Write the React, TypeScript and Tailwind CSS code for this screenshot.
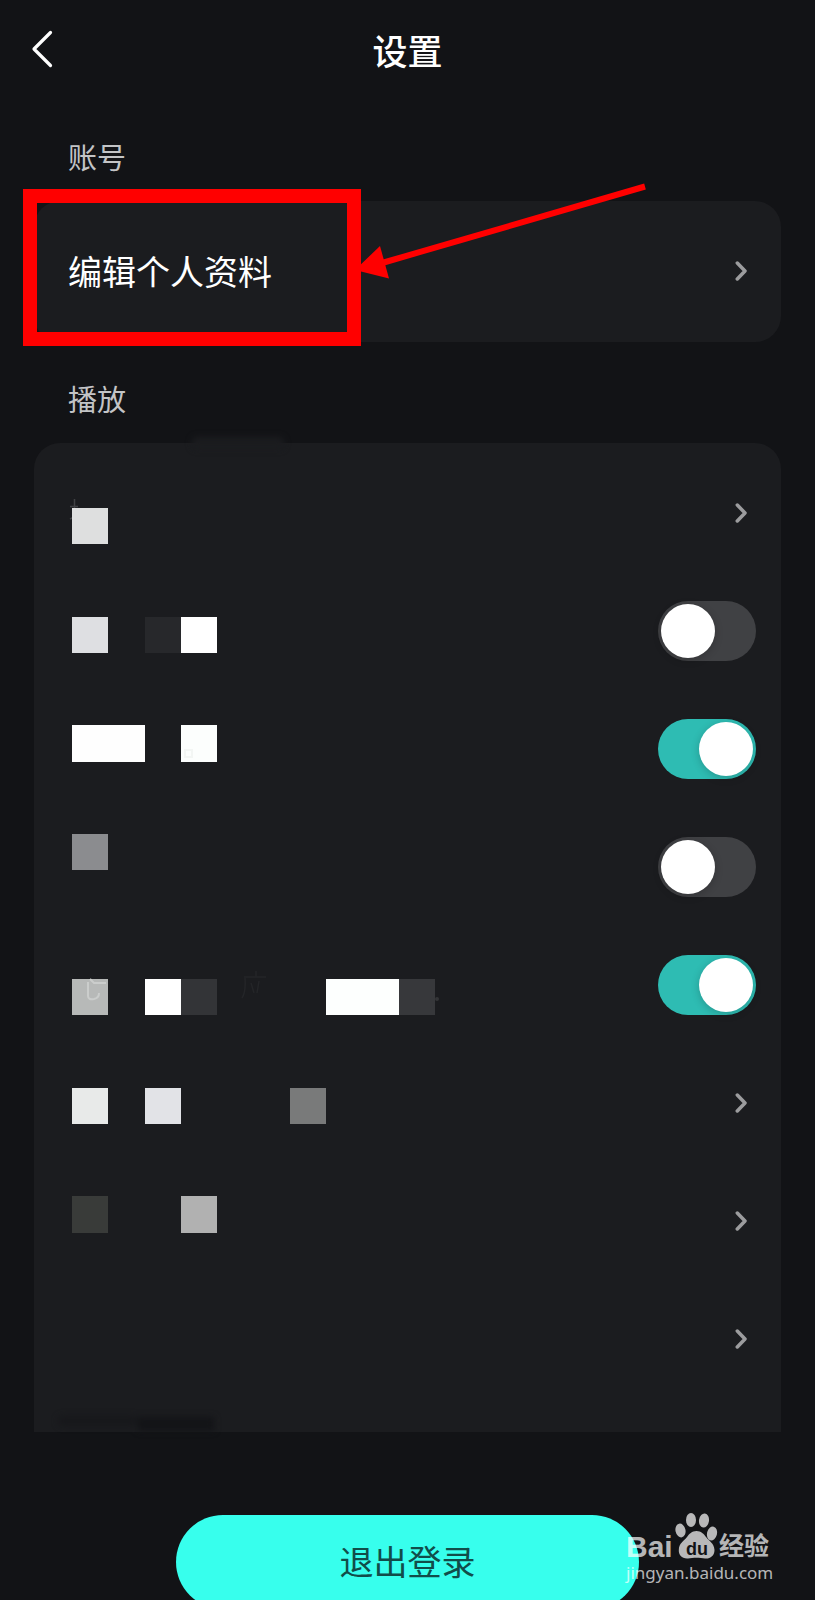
import { useState } from 'react';

type SettingItem = {
  id: string;
  label: string;
  type: 'link' | 'switch';
};

const playbackItems: SettingItem[] = [
  { id: 'quality', label: '播放选项 1', type: 'link' },
  { id: 'option2', label: '播放选项 2', type: 'switch' },
  { id: 'option3', label: '播放选项 3', type: 'switch' },
  { id: 'option4', label: '播放选项 4', type: 'switch' },
  { id: 'option5', label: '播放选项 5', type: 'switch' },
  { id: 'option6', label: '播放选项 6', type: 'link' },
  { id: 'option7', label: '播放选项 7', type: 'link' },
  { id: 'option8', label: '播放选项 8', type: 'link' },
];

// Mosaic blocks over the labels, in cells: column, row, width, colour
const mosaic: [number, number, number, string][] = [
  [0, 0, 1, '#dedfdf'],
  [0, 3, 1, '#dedfe2'],
  [2, 3, 1, '#27282b'],
  [3, 3, 1, '#ffffff'],
  [0, 6, 2, '#fefefe'],
  [3, 6, 1, '#fcfefd'],
  [0, 9, 1, '#8b8c8f'],
  [0, 13, 1, '#b7b9b8'],
  [2, 13, 1, '#ffffff'],
  [3, 13, 1, '#333437'],
  [7, 13, 2, '#fdfffe'],
  [9, 13, 1, '#37383b'],
  [0, 16, 1, '#e8eae9'],
  [2, 16, 1, '#e2e3e7'],
  [6, 16, 1, '#797a7a'],
  [0, 19, 1, '#393b39'],
  [3, 19, 1, '#b1b1b1'],
];

function Chevron() {
  return (
    <svg className="mr-[9px] h-5 w-3 shrink-0" viewBox="0 0 12 20" fill="none" aria-hidden="true">
      <path d="M2.3 2 L10 10 L2.3 18" stroke="#9c9c9e" strokeWidth="3.5" strokeLinecap="round" strokeLinejoin="round" />
    </svg>
  );
}

function SectionTitle({ children }: { children: string }) {
  return (
    <h2 className="px-[34px] pt-9 pb-[25px] text-[29px] leading-10 text-[#c3c4c6]">{children}</h2>
  );
}

function Switch({ label, checked, onChange }: { label: string; checked: boolean; onChange: () => void }) {
  return (
    <input
      type="checkbox"
      role="switch"
      aria-label={label}
      checked={checked}
      onChange={onChange}
      className="h-[60px] w-[98px] cursor-pointer appearance-none rounded-full bg-[#404144] p-[3px] before:block before:size-[54px] before:rounded-full before:bg-white before:shadow-[0_2px_8px_rgba(0,0,0,0.2)] checked:bg-[#2ebcb3] checked:before:ml-[38px]"
    />
  );
}

function Mosaic() {
  return (
    <svg className="pointer-events-none absolute inset-0 size-full overflow-visible" fill="none" aria-hidden="true">
      {/* Smudges on the card edges */}
      <g className="blur-[3px]">
        <rect x="158" y="-6" width="92" height="12" rx="5" fill="#1b1c1f" />
        <rect x="24" y="973" width="80" height="10" rx="5" fill="#17181b" />
        <rect x="104" y="974" width="76" height="14" fill="#131417" />
      </g>
      <g transform="translate(38 65)">
        <path d="M2.5 -9 V0 M-2 -1.5 H6 M-2 11 L2 9" stroke="#404144" strokeWidth="1.5" />
        {mosaic.map(([col, row, width, color]) => (
          <rect
            key={`${col}-${row}`}
            x={col * 36.3}
            y={row * 36.23}
            width={width * 36.3}
            height="36.3"
            fill={color}
            shapeRendering="crispEdges"
          />
        ))}
        {/* Leftover strokes of the covered labels */}
        <path d="M113 242 h7 v7 h-7 z" stroke="#f3f6f4" strokeWidth="2" />
        <path d="M16 474 v14 q0 4 6 3 q5 -1 5 -6 M18 471 l4 4 h12" stroke="#cbcdcc" strokeWidth="2" />
        <path d="M172 469 h22 M184 463 v6 M173 470 q1 14 -3 20 M179 475 l3 10 M187 473 l-2 12" stroke="#242528" strokeWidth="1.5" />
        <circle cx="365" cy="491" r="2" fill="#333437" />
      </g>
    </svg>
  );
}

function Watermark() {
  return (
    <div className="pointer-events-none absolute right-[42px] bottom-4 w-[147px] text-white/70">
      <svg className="h-[50px] w-full overflow-visible" viewBox="0 0 147 50" fill="currentColor">
        <text x="0" y="45" fontSize="30" fontWeight="700" fontFamily="Liberation Sans, sans-serif">Bai</text>
        <ellipse cx="54.500" cy="18.500" rx="5" ry="7" transform="rotate(-12 54.500 18.500)" />
        <ellipse cx="65" cy="8" rx="5" ry="7" />
        <ellipse cx="78" cy="8.500" rx="5" ry="7" transform="rotate(8 78 8.500)" />
        <ellipse cx="86" cy="21.500" rx="5" ry="7" transform="rotate(14 86 21.500)" />
        <path d="M70.500 19 C75 19 78 22 80 25 C83 29 88 31 88.500 38 C88.500 44 84 47 79 46.500 C74 45.500 67 45.500 62 46.500 C56 47 52.500 43 52.800 38 C53 31 58 29 61 25 C63 22 66 19 70.500 19 Z" />
        <text x="60" y="43" fontSize="18" fontWeight="700" fontFamily="Liberation Sans, sans-serif" fill="#121316">du</text>
        <text x="93" y="43" fontSize="25" fontWeight="700" fontFamily="Noto Sans CJK SC, sans-serif">经验</text>
      </svg>
      <p className="text-[17px] leading-[22px] font-['Noto_Sans','Noto_Sans_CJK_SC',sans-serif]">jingyan.baidu.com</p>
    </div>
  );
}

export default function App() {
  const [switches, setSwitches] = useState<Record<string, boolean>>({
    option2: false,
    option3: true,
    option4: false,
    option5: true,
  });

  const toggle = (id: string) => {
    setSwitches((prev) => ({ ...prev, [id]: !prev[id] }));
  };

  return (
    <div className="relative h-screen overflow-hidden bg-[#121316] font-['Noto_Sans_CJK_SC',sans-serif] text-white">
      <div className="flex h-full flex-col overflow-y-auto px-[34px] pb-10 [scrollbar-width:none]">
        {/* Header */}
        <header className="grid h-[100px] shrink-0 grid-cols-[1fr_auto_1fr] items-center">
          <button aria-label="返回" className="-ml-1 w-6 cursor-pointer">
            <svg className="h-10 w-6" viewBox="0 0 24 40" fill="none" aria-hidden="true">
              <path d="M20.500 2.500 L4 19 L20.500 35.500" stroke="#ffffff" strokeWidth="3.2" strokeLinecap="round" strokeLinejoin="round" />
            </svg>
          </button>
          <h1 className="text-[35px] leading-[52px] font-medium">设置</h1>
        </header>

        {/* Account */}
        <section>
          <SectionTitle>账号</SectionTitle>
          <div className="relative">
            <button className="flex h-[141px] w-full cursor-pointer items-center justify-between rounded-[26px] bg-[#1b1c1f] pr-[25px] pb-0.5 pl-[34px] text-[34px]">
              <span>编辑个人资料</span>
              <Chevron />
            </button>
            <div className="pointer-events-none absolute -top-3 -bottom-1 -left-[11px] w-[338px] border-[14px] border-[#ff0000]" />
            <svg className="pointer-events-none absolute -top-5 left-[320px] h-[100px] w-[292px]" viewBox="0 0 292 100" fill="none" aria-hidden="true">
              <path d="M291 5.500 L28 82" stroke="#ff0000" strokeWidth="6" />
              <path d="M1 89 L26 65 L35 97.500 Z" fill="#ff0000" />
            </svg>
          </div>
        </section>

        {/* Playback */}
        <section>
          <SectionTitle>播放</SectionTitle>
          <div className="relative flex flex-col rounded-t-[26px] bg-[#1b1c1f] pt-[11px] pb-[34px]">
            {playbackItems.map((item) =>
              item.type === 'link' ? (
                <button
                  key={item.id}
                  aria-label={item.label}
                  className="flex h-[118px] cursor-pointer items-center justify-end pr-[25px]"
                >
                  <Chevron />
                </button>
              ) : (
                <div key={item.id} className="flex h-[118px] items-center justify-end pr-[25px]">
                  <Switch label={item.label} checked={switches[item.id]} onChange={() => toggle(item.id)} />
                </div>
              )
            )}
            <Mosaic />
          </div>
        </section>

        {/* Logout */}
        <button className="mt-[83px] flex h-[94px] w-[62%] shrink-0 cursor-pointer items-center justify-center self-center rounded-full bg-[#37ffed] pb-1 text-[34px] text-[#114d4a]">
          退出登录
        </button>
      </div>
      <Watermark />
    </div>
  );
}
